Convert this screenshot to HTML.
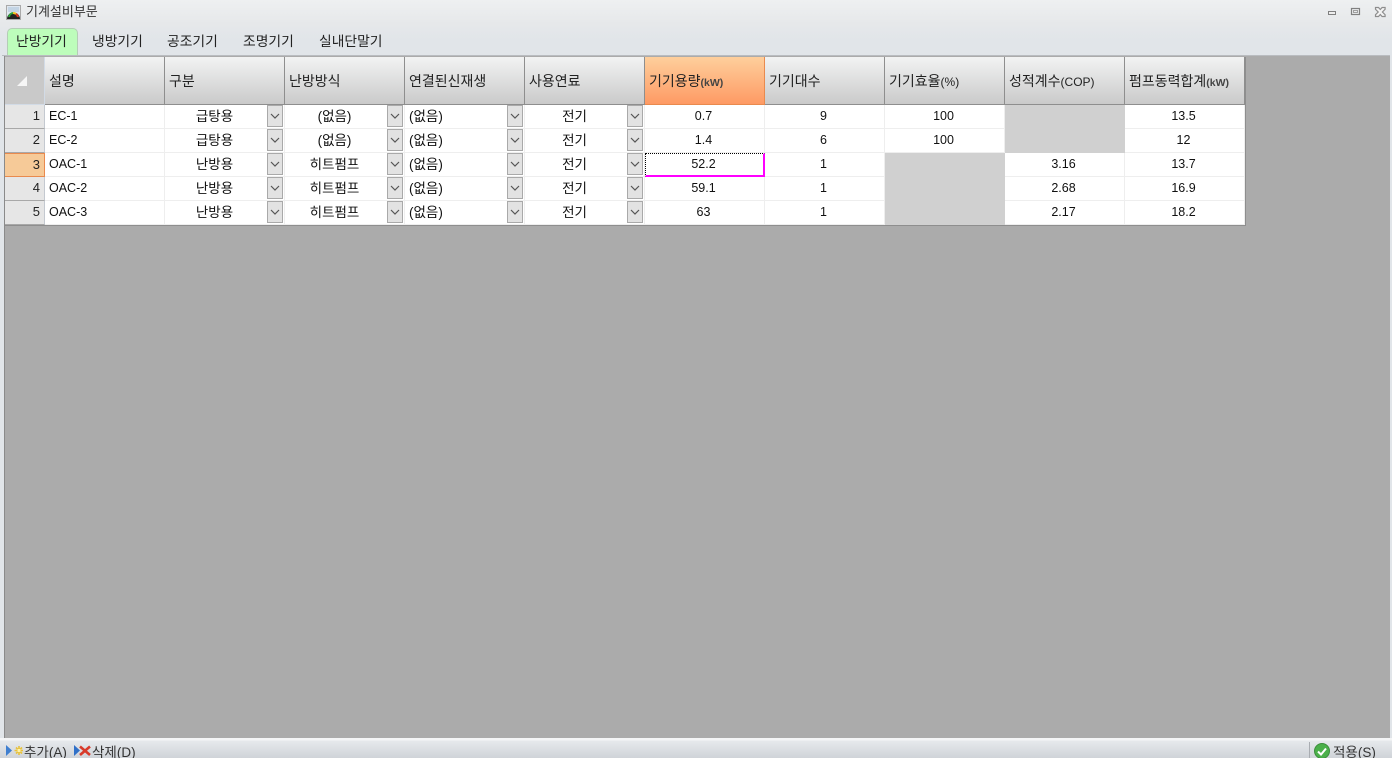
<!DOCTYPE html>
<html lang="ko">
<head>
<meta charset="utf-8">
<title>기계설비부문</title>
<style>
html,body{margin:0;padding:0}
body{width:1392px;height:758px;overflow:hidden;position:relative;background:#e1e5e9;font-family:"Liberation Sans","Noto Sans CJK KR",sans-serif;color:#111;}
.titlebar{position:absolute;left:0;top:0;width:1392px;height:55px;background:linear-gradient(#eef0f1 0,#e6e8ea 24px,#e1e5e9 40px,#e1e5e9 55px)}
.title{position:absolute;left:26px;top:2px;font-size:13px;line-height:20px;color:#333}
.tab{position:absolute;top:33px;font-size:13.8px;line-height:17px;color:#222;white-space:nowrap}
.tab0{position:absolute;left:7px;top:28px;width:69px;height:26px;background:#bdfdbb;border:1px solid #b4cdb6;border-bottom:0;border-radius:5px 5px 0 0}
.area{position:absolute;left:4px;top:55px;width:1386px;height:683px;background:#ababab;box-shadow:inset 0 1px 0 #8c8c8c}
.edgeT{position:absolute;left:2px;top:55px;width:1388px;height:1px;background:#b9bcc0}
.edgeL{position:absolute;left:4px;top:56px;width:1px;height:682px;background:#8a8a8a}
table{position:absolute;left:5px;top:57px;border-collapse:separate;border-spacing:0;table-layout:fixed;width:1240px;background:#fff}
th,td{padding:0;overflow:hidden;white-space:nowrap;box-sizing:border-box}
th{height:48px;font-weight:400;font-size:14px;text-align:left;padding-left:4px;padding-top:1px;background:linear-gradient(#f2f3f3,#cacaca);border-right:1px solid #8e8e8e;border-bottom:1px solid #8e8e8e;color:#222}
th small{font-size:12px}
th small.k{font-size:10.5px;font-weight:700;color:#444}
th.sel{background:linear-gradient(#fecf9c,#fe9a64);border-right-color:#e98a4e;border-bottom-color:#e98a4e}
th.corner{background:#c9c9c9;border-right:1px solid #d2dbe6;border-bottom:1px solid #d2dbe6;position:relative;padding:0}
.tri{position:absolute;left:12px;top:19px;width:0;height:0;border-style:solid;border-width:0 0 10px 10px;border-color:transparent transparent #f6f6f6 transparent}
td{height:24px;font-size:12.5px;border-right:1px solid #eeeeee;border-bottom:1px solid #eeeeee;text-align:center;padding-right:2px;position:relative;background:#fff;padding-bottom:1px;line-height:22px}
td.rh{background:#e6e6e6;border-right:1px solid #c4c9d0;border-bottom:1px solid #a8a8a8;text-align:right;padding-right:4px;font-size:13px;color:#222}
td.rhs{background:#f6ca98;border-right:1px solid #e98a4e;border-bottom:1px solid #e98a4e;border-top:1px solid #e98a4e;line-height:21px}
td.l{text-align:left;padding-left:4px;padding-right:0}
td.c{padding-right:20px;font-size:13.5px;padding-top:1px;padding-bottom:0}
td.ll{text-align:left;padding-left:4px;padding-right:0;font-size:13.5px;padding-top:1px;padding-bottom:0}
td.d{background:#d0d0d0;border-color:#d0d0d0}
td.f{border-right:0;border-bottom:0;padding-right:3px;padding-bottom:2px}
.fb{position:absolute;left:0;top:0;width:120px;height:24px;box-sizing:border-box;border-top:1px dotted #000;border-left:1px dotted #000;border-right:2px solid #f0f;border-bottom:2px solid #f0f}
.b{position:absolute;right:1px;top:0;width:16px;height:22px;box-sizing:border-box;background:#e2e2e2;border:1px solid #a9a9a9}
.b svg{position:absolute;left:2px;top:6px}
tr.last td{border-bottom:0}
.tbot{position:absolute;left:5px;top:225px;width:1241px;height:1px;background:#8e8e8e}
.tright{position:absolute;left:1245px;top:57px;width:1px;height:169px;background:#8e8e8e}
.status{position:absolute;left:0;top:738px;width:1392px;height:20px;background:linear-gradient(#f4f5f6 0,#f4f5f6 2px,#e6e9ec 3px,#cfd3d8 20px);overflow:hidden}
.st{position:absolute;top:6px;font-size:13.5px;line-height:18px;color:#333;white-space:nowrap}
.sep{position:absolute;left:1309px;top:4px;width:1px;height:16px;background:#a9adb2}
svg{display:block}
</style>
</head>
<body>
<div class="titlebar"></div>
<svg style="position:absolute;left:6px;top:5px" width="15" height="15" viewBox="0 0 15 15"><rect x="0.5" y="0.5" width="14" height="14" fill="#dfe7ef" stroke="#a9a9a9"/><rect x="2" y="2" width="11" height="5" fill="#c3d4e4"/><path d="M1 14 A6.5 6.5 0 0 1 14 14Z" fill="#222"/><path d="M3 12 A4.5 4.5 0 0 1 7 8" stroke="#2fa33a" stroke-width="2" fill="none"/><path d="M7 8 A4.5 4.5 0 0 1 10 9" stroke="#f2c01e" stroke-width="2" fill="none"/><path d="M10 9 A4.5 4.5 0 0 1 12 12" stroke="#d6321f" stroke-width="2" fill="none"/></svg>
<div class="title">기계설비부문</div>
<svg style="position:absolute;left:1326px;top:6px" width="62" height="12" viewBox="0 0 62 12">
<rect x="2.500" y="5.500" width="7" height="3" fill="#eee" stroke="#808080"/>
<rect x="25.500" y="2.500" width="8" height="6" fill="none" stroke="#808080" stroke-width="1.200"/><rect x="27.500" y="4.500" width="4" height="2" fill="none" stroke="#a0a0a0"/>
<path d="M49.500 1.500h3l1.800 2 1.800-2h3v1.800l-2.700 2.700 2.700 2.700v1.800h-3l-1.800-2-1.800 2h-3v-1.800l2.700-2.700-2.700-2.700z" fill="#f4f4f4" stroke="#8d8d8d" stroke-width="1.200"/></svg>

<div class="tab0"></div>
<div class="tab" style="left:16px">난방기기</div>
<div class="tab" style="left:92px">냉방기기</div>
<div class="tab" style="left:167px">공조기기</div>
<div class="tab" style="left:243px">조명기기</div>
<div class="tab" style="left:319px">실내단말기</div>

<div class="area"></div>
<div class="edgeT"></div>
<div class="edgeL"></div>

<table>
<colgroup><col style="width:40px"><col style="width:120px"><col style="width:120px"><col style="width:120px"><col style="width:120px"><col style="width:120px"><col style="width:120px"><col style="width:120px"><col style="width:120px"><col style="width:120px"><col style="width:120px"></colgroup>
<tr>
<th class="corner"><span class="tri"></span></th>
<th>설명</th><th>구분</th><th>난방방식</th><th>연결된신재생</th><th>사용연료</th>
<th class="sel">기기용량<small class="k">(kW)</small></th><th>기기대수</th><th>기기효율<small>(%)</small></th><th>성적계수<small>(COP)</small></th><th>펌프동력합계<small class="k">(kW)</small></th>
</tr>
<tr>
<td class="rh">1</td><td class="l">EC-1</td>
<td class="c">급탕용<span class="b"><svg width="10" height="8" viewBox="0 0 10 8"><path d="M1 2l4 4 4-4" fill="none" stroke="#555" stroke-width="1.200"/></svg></span></td>
<td class="c">(없음)<span class="b"><svg width="10" height="8" viewBox="0 0 10 8"><path d="M1 2l4 4 4-4" fill="none" stroke="#555" stroke-width="1.200"/></svg></span></td>
<td class="ll">(없음)<span class="b"><svg width="10" height="8" viewBox="0 0 10 8"><path d="M1 2l4 4 4-4" fill="none" stroke="#555" stroke-width="1.200"/></svg></span></td>
<td class="c">전기<span class="b"><svg width="10" height="8" viewBox="0 0 10 8"><path d="M1 2l4 4 4-4" fill="none" stroke="#555" stroke-width="1.200"/></svg></span></td>
<td>0.7</td><td>9</td><td>100</td><td class="d"></td><td>13.5</td>
</tr>
<tr>
<td class="rh">2</td><td class="l">EC-2</td>
<td class="c">급탕용<span class="b"><svg width="10" height="8" viewBox="0 0 10 8"><path d="M1 2l4 4 4-4" fill="none" stroke="#555" stroke-width="1.200"/></svg></span></td>
<td class="c">(없음)<span class="b"><svg width="10" height="8" viewBox="0 0 10 8"><path d="M1 2l4 4 4-4" fill="none" stroke="#555" stroke-width="1.200"/></svg></span></td>
<td class="ll">(없음)<span class="b"><svg width="10" height="8" viewBox="0 0 10 8"><path d="M1 2l4 4 4-4" fill="none" stroke="#555" stroke-width="1.200"/></svg></span></td>
<td class="c">전기<span class="b"><svg width="10" height="8" viewBox="0 0 10 8"><path d="M1 2l4 4 4-4" fill="none" stroke="#555" stroke-width="1.200"/></svg></span></td>
<td>1.4</td><td>6</td><td>100</td><td class="d"></td><td>12</td>
</tr>
<tr>
<td class="rh rhs">3</td><td class="l">OAC-1</td>
<td class="c">난방용<span class="b"><svg width="10" height="8" viewBox="0 0 10 8"><path d="M1 2l4 4 4-4" fill="none" stroke="#555" stroke-width="1.200"/></svg></span></td>
<td class="c">히트펌프<span class="b"><svg width="10" height="8" viewBox="0 0 10 8"><path d="M1 2l4 4 4-4" fill="none" stroke="#555" stroke-width="1.200"/></svg></span></td>
<td class="ll">(없음)<span class="b"><svg width="10" height="8" viewBox="0 0 10 8"><path d="M1 2l4 4 4-4" fill="none" stroke="#555" stroke-width="1.200"/></svg></span></td>
<td class="c">전기<span class="b"><svg width="10" height="8" viewBox="0 0 10 8"><path d="M1 2l4 4 4-4" fill="none" stroke="#555" stroke-width="1.200"/></svg></span></td>
<td class="f">52.2<span class="fb"></span></td><td>1</td><td class="d"></td><td>3.16</td><td>13.7</td>
</tr>
<tr>
<td class="rh">4</td><td class="l">OAC-2</td>
<td class="c">난방용<span class="b"><svg width="10" height="8" viewBox="0 0 10 8"><path d="M1 2l4 4 4-4" fill="none" stroke="#555" stroke-width="1.200"/></svg></span></td>
<td class="c">히트펌프<span class="b"><svg width="10" height="8" viewBox="0 0 10 8"><path d="M1 2l4 4 4-4" fill="none" stroke="#555" stroke-width="1.200"/></svg></span></td>
<td class="ll">(없음)<span class="b"><svg width="10" height="8" viewBox="0 0 10 8"><path d="M1 2l4 4 4-4" fill="none" stroke="#555" stroke-width="1.200"/></svg></span></td>
<td class="c">전기<span class="b"><svg width="10" height="8" viewBox="0 0 10 8"><path d="M1 2l4 4 4-4" fill="none" stroke="#555" stroke-width="1.200"/></svg></span></td>
<td>59.1</td><td>1</td><td class="d"></td><td>2.68</td><td>16.9</td>
</tr>
<tr>
<td class="rh">5</td><td class="l">OAC-3</td>
<td class="c">난방용<span class="b"><svg width="10" height="8" viewBox="0 0 10 8"><path d="M1 2l4 4 4-4" fill="none" stroke="#555" stroke-width="1.200"/></svg></span></td>
<td class="c">히트펌프<span class="b"><svg width="10" height="8" viewBox="0 0 10 8"><path d="M1 2l4 4 4-4" fill="none" stroke="#555" stroke-width="1.200"/></svg></span></td>
<td class="ll">(없음)<span class="b"><svg width="10" height="8" viewBox="0 0 10 8"><path d="M1 2l4 4 4-4" fill="none" stroke="#555" stroke-width="1.200"/></svg></span></td>
<td class="c">전기<span class="b"><svg width="10" height="8" viewBox="0 0 10 8"><path d="M1 2l4 4 4-4" fill="none" stroke="#555" stroke-width="1.200"/></svg></span></td>
<td>63</td><td>1</td><td class="d"></td><td>2.17</td><td>18.2</td>
</tr>
</table>
<div class="tbot"></div>
<div class="tright"></div>

<div class="status">
<svg style="position:absolute;left:5px;top:7px" width="18" height="12" viewBox="0 0 18 12"><path d="M1 0l6 5.500-6 5.500z" fill="#3f7fd0"/><g stroke="#e8c23a" stroke-width="1.600"><path d="M14 1v9M9.500 5.500h9M11 2.500l6 6M17 2.500l-6 6"/></g><rect x="12.500" y="4" width="3" height="3" fill="#fff3a8"/></svg>
<div class="st" style="left:24px">추가(A)</div>
<svg style="position:absolute;left:74px;top:7px" width="18" height="12" viewBox="0 0 18 12"><path d="M0 0l6 5.500-6 5.500z" fill="#3070c8"/><path d="M6 1.500l10 8.500M16 1.500l-10 8.500" stroke="#d83a2a" stroke-width="2.600"/></svg>
<div class="st" style="left:92px">삭제(D)</div>
<div class="sep"></div>
<svg style="position:absolute;left:1314px;top:5px" width="16" height="16" viewBox="0 0 16 16"><circle cx="8" cy="8" r="7.500" fill="#4bb04a" stroke="#3c8f3c"/><path d="M4 8.500l3 3 5-6" fill="none" stroke="#fff" stroke-width="2"/></svg>
<div class="st" style="left:1333px">적용(S)</div>
</div>
</body>
</html>
